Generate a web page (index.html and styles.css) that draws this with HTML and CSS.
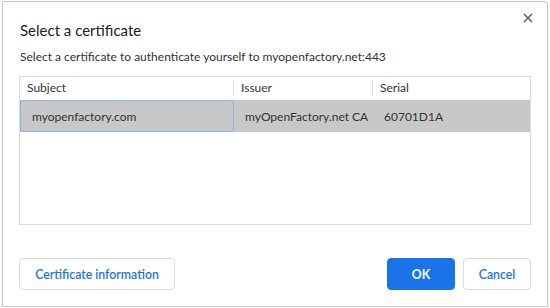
FILE: index.html
```html
<!DOCTYPE html>
<html lang="en">
<head>
    <meta charset="UTF-8">
    <title>Select a certificate</title>
    <link rel="stylesheet" href="styles.css">
</head>
<body>
    <div class="dialog">
        <div class="dialog-head">
            <h1>Select a certificate</h1>
            <button class="close" aria-label="Close">
                <svg width="10" height="10" viewBox="0 0 10 10"><path d="M1 1L9 9M9 1L1 9" stroke="#5f6368" stroke-width="1.6"/></svg>
            </button>
        </div>
        <p class="intro">Select a certificate to authenticate yourself to myopenfactory.net:443</p>

        <div class="cert-table">
            <div class="row head">
                <div class="cell">Subject</div>
                <div class="cell">Issuer</div>
                <div class="cell">Serial</div>
                <div class="cell"></div>
            </div>
            <div class="row selected">
                <div class="cell focus">myopenfactory.com</div>
                <div class="cell">myOpenFactory.net CA</div>
                <div class="cell">60701D1A</div>
                <div class="cell"></div>
            </div>
        </div>

        <div class="actions">
            <button class="btn">Certificate information</button>
            <div class="spacer"></div>
            <button class="btn primary">OK</button>
            <button class="btn">Cancel</button>
        </div>
    </div>
</body>
</html>
```

FILE: styles.css
```css
/* Certificate picker dialog */
body {
    margin: 0;
    background: #ffffff;
    font-family: 'Lato', 'Noto Sans', sans-serif;
    color: #202124;
}

.dialog {
    width: 546px;
    height: 306px;
    margin: 1px 0 0 2px;
    border: 1px solid #c9c9c9;
    border-radius: 0 4px 0 0;
    box-shadow: 0 1px 2px rgba(0, 0, 0, 0.15);
    background: #fff;
    box-sizing: border-box;
    padding: 0 16px 0 16px;
    display: flex;
    flex-direction: column;
}

.dialog-head {
    display: flex;
    align-items: center;
    justify-content: space-between;
    height: 47px;
    padding-top: 8px;
    box-sizing: border-box;
}

h1 {
    margin: 0 0 0 1px;
    font-size: 15px;
    font-weight: 400;
    color: #202124;
}

.close {
    border: 0;
    background: none;
    padding: 0;
    width: 12px;
    height: 12px;
    margin: -24px -3px 0 0;
    display: flex;
    align-items: center;
    justify-content: center;
}

.intro {
    margin: 0 0 11px 1px;
    font-size: 12px;
    color: #333;
    line-height: 16px;
    white-space: nowrap;
}

.cert-table {
    height: 149px;
    border: 1px solid #dadada;
    box-sizing: border-box;
}

.row {
    display: grid;
    grid-template-columns: 213px 139px 139px 1fr;
    font-size: 12px;
    white-space: nowrap;
}

.row.head {
    height: 22px;
    align-items: center;
    margin-bottom: 1px;
}

.row.head .cell {
    padding-left: 7px;
    line-height: 16px;
    color: #333;
}

.row.head .cell + .cell {
    border-left: 1px solid #dedede;
}

.row.selected {
    background: #c8c8c8;
    height: 32px;
    align-items: stretch;
}

.row.selected .cell {
    display: flex;
    align-items: center;
    padding-left: 12px;
    color: #333;
}

.row.selected .focus {
    border: 1px solid #90b4e0;
    border-radius: 2px;
    background: #c8c8c8;
    padding-left: 11px;
    margin-right: -1px;
}

.actions {
    display: flex;
    gap: 8px;
    margin-top: 33px;
}

.spacer {
    flex: 1;
}

.btn {
    height: 32px;
    border: 1px solid #dadce0;
    border-radius: 4px;
    background: #fff;
    color: #1a73e8;
    font-family: inherit;
    font-size: 12.3px;
    font-weight: 600;
    padding: 0;
    white-space: nowrap;
}

.btn:first-child {
    width: 156px;
}

.btn.primary {
    background: #1a73e8;
    border-color: #1a73e8;
    color: #fff;
    width: 68px;
    font-weight: 700;
}

.btn:last-child {
    width: 68px;
}
```
